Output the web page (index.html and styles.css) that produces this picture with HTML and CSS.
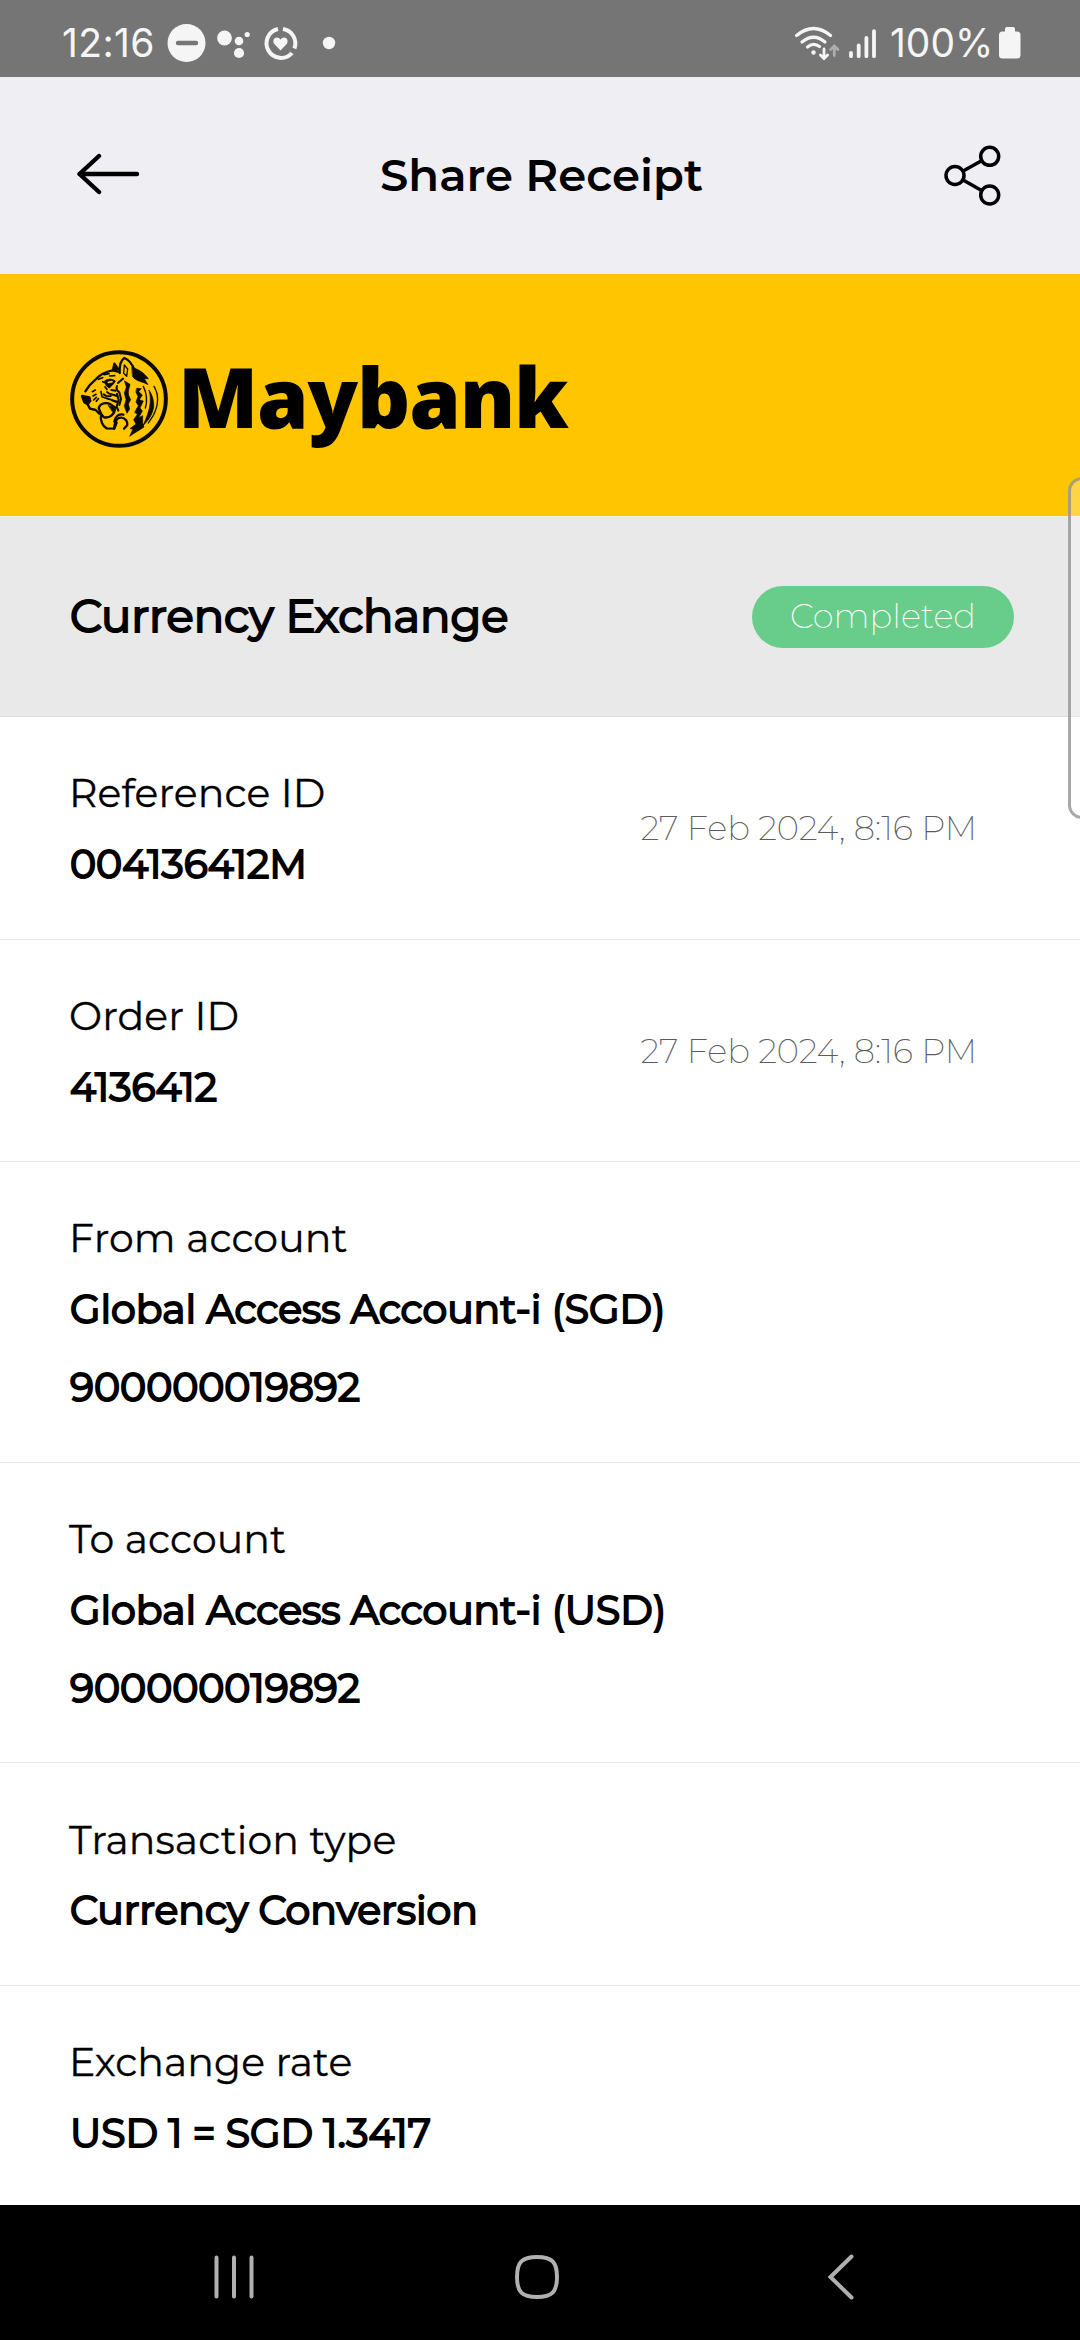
FILE: index.html
```html
<!DOCTYPE html>
<html lang="en">
<head>
<meta charset="utf-8">
<title>Share Receipt</title>
<link rel="stylesheet" href="styles.css">
</head>
<body>
<div class="screen">
  <div class="status">
    <span class="clock">12:16</span>
    <svg class="status-icons" width="170" height="40" viewBox="167 23 170 40" fill="#f5f5f5">
      <circle cx="186.5" cy="43" r="19"/>
      <path d="M178 43h18" stroke="#757575" stroke-width="4.4" stroke-linecap="round"/>
      <circle cx="224.5" cy="38" r="7.4"/><circle cx="239" cy="41" r="4.3"/><circle cx="247.2" cy="34.5" r="2.6"/><circle cx="239" cy="53" r="5.1"/>
      <g fill="none" stroke="#f5f5f5" stroke-width="4">
        <path d="M283 29A14.6 14.6 0 0 1 294.4 48.5"/>
        <path d="M278 29A14.6 14.6 0 1 0 292 53"/>
      </g>
      <path d="M280.5 50.5l-6-6.2c-2-2.4-1.200-6.800 2.200-6.800 2 0 3.200 1 3.800 2.200.6-1.200 1.800-2.200 3.800-2.200 3.400 0 4.200 4.400 2.200 6.800z"/>
      <circle cx="329" cy="43" r="6.2"/>
    </svg>
    <div class="status-right">
      <svg width="82" height="36" viewBox="794 25 82 36" fill="none" stroke="#f5f5f5" stroke-linecap="round">
        <g stroke-width="3.2">
          <path d="M795.600 35.500Q812.500 21.500 829.500 35.500"/><path d="M801 42Q812.500 32.500 824 42"/><path d="M806.500 47Q812.500 42 818.500 46.500"/>
        </g>
        <circle cx="812.500" cy="52.500" r="2.200" fill="#f5f5f5" stroke="none"/>
        <path d="M823 49v9M819.400 55l3.600 3.600 3.600-3.600" stroke-width="2.800"/>
        <path d="M833.300 55.500v-9M829.700 49.500l3.600-3.600 3.600 3.600" stroke="#adadad" stroke-width="2.800"/>
        <g stroke-width="3.800"><path d="M850 53v3.200M857.700 45.500v10.700M865.400 38v18.200M873 31.200v25"/></g>
      </svg>
      <span class="percent">100%</span>
      <svg class="battery" width="22" height="32" viewBox="0 0 22 32" fill="#f5f5f5"><rect x="6" y="0" width="10" height="8" rx="2"/><rect x="0" y="4.500" width="21.500" height="27" rx="3.500"/></svg>
    </div>
  </div>

  <header class="header">
    <svg class="back" width="64" height="42" viewBox="76 153 64 42" fill="none" stroke="#000" stroke-width="4.400" stroke-linecap="round" stroke-linejoin="round"><path d="M137 174H79.500M99 156L79.500 174 99 192"/></svg>
    <h1 class="title">Share Receipt</h1>
    <svg width="58" height="62" viewBox="941.500 145 58 62" fill="none" stroke="#000" stroke-width="3.500"><circle cx="953.500" cy="175.500" r="9"/><circle cx="988.200" cy="156.300" r="9"/><circle cx="988.200" cy="195" r="9"/><path d="M961.600 171l18.500-10.200M961.600 180l18.500 10.500"/></svg>
  </header>

  <div class="brand">
    <svg class="crest" width="100" height="100" viewBox="25 28 300 300" fill="none" stroke="#0b0900" stroke-width="7" stroke-linejoin="round" stroke-linecap="round">
      <circle cx="175" cy="178" r="140.500" stroke-width="12"/>
      <path d="M74 155C82 142 90 132 101 123 114 108 132 96 156 92L172 96"/>
      <path d="M157 91L161 72 173 89Z" fill="#0b0900"/>
      <path d="M177 100C176 82 180 62 191 55 207 61 215 75 221 90"/>
      <path d="M191 76L201 88 198 110 189 101Z" stroke-width="4"/>
      <path d="M214 83C232 88 250 99 263 117L251 117 262 135C247 125 228 127 216 111Z" fill="#0b0900" stroke-width="2"/>
      <path d="M64 169L86 173 89 184 81 194 71 188Z" fill="#0b0900"/>
      <path d="M81 194L88 207 105 211 116 222"/>
      <path d="M114 205C119 190 137 187 150 194L164 204C162 224 148 236 130 233 121 228 120 218 114 205Z"/>
      <path d="M143 197L163 205 158 219Z" fill="#0b0900" stroke-width="2"/>
      <path d="M121 227C118 242 126 260 138 266L160 267C162 245 171 233 182 234 195 235 201 246 200 256L190 267"/>
      <path d="M161 246C166 227 176 222 188 225M161 267L168 249"/>
      <path d="M133 123C143 117 154 117 164 124L158 133 146 145 137 138Z" fill="#0b0900" stroke-width="3"/>
      <path d="M143 128L154 126" stroke="#ffc600" stroke-width="5"/>
      <path d="M130 105L145 102M147 109L162 108M113 119L126 114M126 126L135 130M133 142L139 149" stroke-width="5"/>
      <path d="M95 156L104 151M97 169L106 164M99 181L107 173M113 177L107 185M121 156L124 171 137 176 151 180 166 187" stroke-width="5"/>
      <path d="M139 157C147 168 158 161 169 170M129 164L139 170 150 169M152 151L165 153M154 182L172 187M169 162L174 180 168 200 173 213" stroke-width="6"/>
      <path d="M169 139C165 147 169 153 176 158L181 178 176 196M172 130C180 123 183 120 187 117" stroke-width="6"/>
      <path d="M192 124L208 134C206 147 201 152 204 167L210 180 203 193 207 208 199 221 191 200 196 180 191 160 197 143Z" fill="#0b0900" stroke-width="2"/>
      <path d="M229 146L242 147 234 156 245 166 236 180 248 184 238 205 245 214 234 234 246 228 246 250 250 262C236 272 219 281 207 290L217 268 208 267 226 253 219 240 230 224 222 218 233 198 226 187 232 170 226 158Z" fill="#0b0900" stroke-width="2"/>
      <path d="M265 152C275 184 265 215 255 239L248 257C267 238 275 224 279 202 280 184 275 164 265 152Z" fill="#0b0900" stroke-width="2"/>
      <path d="M280 140C295 165 294 195 278 227L263 250M248 140C258 160 260 185 254 205" stroke-width="4"/>
    </svg>
    <span class="wordmark">Maybank</span>
  </div>

  <main class="receipt">
    <section class="summary">
      <h2 class="kind">Currency Exchange</h2>
      <span class="pill">Completed</span>
    </section>
    <section class="row">
      <div><p class="label">Reference ID</p><p class="value">004136412M</p></div>
      <time class="date">27 Feb 2024, 8:16 PM</time>
    </section>
    <section class="row">
      <div><p class="label">Order ID</p><p class="value">4136412</p></div>
      <time class="date">27 Feb 2024, 8:16 PM</time>
    </section>
    <section class="row">
      <div><p class="label">From account</p><p class="value">Global Access Account-i (SGD)</p><p class="value">900000019892</p></div>
    </section>
    <section class="row">
      <div><p class="label">To account</p><p class="value">Global Access Account-i (USD)</p><p class="value">900000019892</p></div>
    </section>
    <section class="row">
      <div><p class="label">Transaction type</p><p class="value">Currency Conversion</p></div>
    </section>
    <section class="row">
      <div><p class="label">Exchange rate</p><p class="value">USD 1 = SGD 1.3417</p></div>
    </section>
  </main>

  <nav class="navbar">
    <svg width="44" height="46" viewBox="0 0 44 46" stroke="#b0b0b0" stroke-width="4" stroke-linecap="round"><path d="M4.500 3.500v39M22 3.500v39M39.500 3.500v39"/></svg>
    <svg class="home" width="46" height="46" viewBox="0 0 46 46" fill="none" stroke="#b0b0b0" stroke-width="4"><path d="M23 3C38 3 43 8 43 23S38 43 23 43 3 38 3 23 8 3 23 3Z"/></svg>
    <svg width="30" height="48" viewBox="0 0 30 48" fill="none" stroke="#b0b0b0" stroke-width="4" stroke-linecap="round" stroke-linejoin="miter"><path d="M25.500 3.500L4.500 24 25.500 44.500"/></svg>
  </nav>
  <div class="edge-handle"></div>
</div>
</body>
</html>
```
FILE: styles.css
```css
* { box-sizing: border-box; }
body { margin: 0; background: #fff; color: #000; font-family: Montserrat, Inter, sans-serif; }
h1, h2, p { margin: 0; }
svg { display: block; flex: none; }

.screen { position: relative; width: 1080px; height: 2340px; display: flex; flex-direction: column; overflow: hidden; }

.status { height: 77px; flex: none; background: #757575; color: #f5f5f5; display: flex; align-items: center; padding: 9px 59px 0 62px; font-family: Inter, sans-serif; font-size: 39px; line-height: 48px; }
.clock { width: 105px; letter-spacing: 0.4px; }
.status-right { margin-left: auto; display: flex; align-items: center; }
.percent { width: 107px; margin-left: 13px; }
.battery { margin-left: 2px; }

.header { height: 197px; flex: none; background: #eeeef3; display: flex; align-items: center; justify-content: space-between; padding: 0 79px 0 76px; }
.back { margin-top: -3px; }
.title { margin-top: -2px; font-size: 45px; font-weight: 600; line-height: 54px; white-space: nowrap; }

.brand { height: 242px; flex: none; background: #ffc600; display: flex; align-items: center; padding: 8px 0 0 68.500px; }
.wordmark { margin: -6px 0 0 9.500px; font-family: "Open Sans", sans-serif; font-weight: 800; font-size: 83px; line-height: 100px; letter-spacing: -1.2px; }

.receipt { flex: 1; min-height: 0; overflow: hidden; border-top: 1px solid #f4efdc; }
.summary { height: 200px; background: #e9e9e9; border-bottom: 1px solid #dedede; display: flex; align-items: center; justify-content: space-between; padding: 0 66px 0 70px; }
.kind { margin-top: -2px; font-size: 45px; font-weight: 400; line-height: 54px; -webkit-text-stroke: 2.1px #000; }
.pill { width: 262px; height: 62px; padding-bottom: 2px; border-radius: 31px; background: #68cd8a; color: #fff; display: flex; align-items: center; justify-content: center; font-size: 33.75px; font-weight: 200; line-height: 40px; }

.row { display: flex; justify-content: space-between; align-items: center; padding: 54.2px 103px 35.6px 70px; border-bottom: 1px solid #e9e9e9; }
.row:last-child { border-bottom: 0; }
.label { margin: 0 0 9.8px -1px; font-size: 39.4px; line-height: 44px; letter-spacing: 0.1px; white-space: nowrap; -webkit-text-stroke: 0.3px #000; }
.value { font-size: 39.4px; font-weight: 400; line-height: 78px; white-space: nowrap; -webkit-text-stroke: 2px #000; }
.date { margin-top: -18px; font-size: 33.75px; font-weight: 200; line-height: 40px; letter-spacing: -0.1px; color: #5c5c5c; }

.navbar { height: 135px; flex: none; background: #000; display: flex; align-items: center; justify-content: space-between; padding: 8px 224px 0 212px; }
.home { margin-right: 9px; }

.edge-handle { position: absolute; left: 1067.5px; top: 477px; width: 40px; height: 342px; border: 3px solid rgba(140, 140, 140, 0.75); border-radius: 14px; background: rgba(255, 255, 255, 0.27); }
```
